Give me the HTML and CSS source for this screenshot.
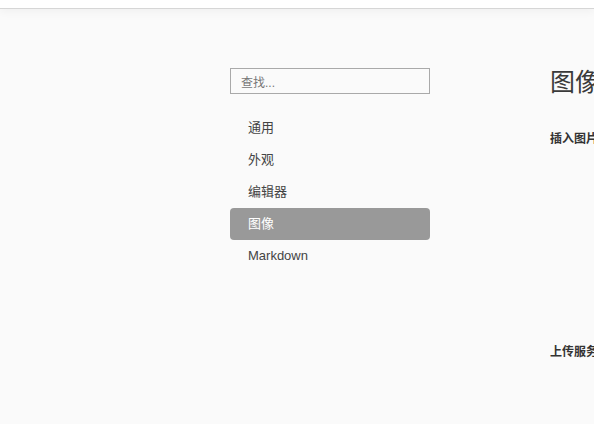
FILE: index.html
```html
<!DOCTYPE html>
<html lang="zh-CN">
<head>
<meta charset="utf-8">
<title>偏好设置</title>
<link rel="stylesheet" href="styles.css">
</head>
<body>
<div class="topbar"></div>
<div class="main">
  <nav class="sidebar">
    <div class="search"><span class="placeholder">查找...</span></div>
    <ul class="menu">
      <li class="item">通用</li>
      <li class="item">外观</li>
      <li class="item">编辑器</li>
      <li class="item active">图像</li>
      <li class="item">Markdown</li>
    </ul>
  </nav>
  <section class="content">
    <h1 class="title">图像</h1>
    <h2 class="section-head">插入图片时...</h2>
    <h2 class="section-head upload">上传服务设定</h2>
  </section>
</div>
</body>
</html>
```
FILE: styles.css
```css
html, body {
  margin: 0;
  padding: 0;
  width: 594px;
  height: 424px;
  overflow: hidden;
  background: #fafafa;
  font-family: "Liberation Sans", "Noto Sans CJK SC", sans-serif;
  color: #333;
}
.topbar {
  height: 8px;
  background: #ffffff;
  border-bottom: 1px solid #d6d6d6;
  box-shadow: 0 2px 10px rgba(0,0,0,0.05);
}
.main {
  display: flex;
  padding-left: 230px;
  padding-top: 59px;
}
.sidebar {
  width: 200px;
  flex: none;
}
.search {
  box-sizing: border-box;
  height: 26px;
  border: 1px solid #a9a9a9;
  background: #fafafa;
  padding-left: 10px;
  display: flex;
  align-items: center;
}
.placeholder {
  font-size: 12px;
  color: #777;
}
.menu {
  list-style: none;
  margin: 18px 0 0;
  padding: 0;
}
.item {
  height: 32px;
  line-height: 32px;
  padding-left: 18px;
  font-size: 13px;
  color: #444;
  border-radius: 4px;
}
.item.active {
  background: #999999;
  color: #ffffff;
}
.content {
  margin-left: 120px;
  white-space: nowrap;
}
.title {
  margin: 0;
  font-size: 25px;
  font-weight: normal;
  line-height: 28px;
  color: #3a3a3a;
}
.section-head {
  margin: 35px 0 0;
  font-size: 12px;
  font-weight: bold;
  line-height: 16px;
  color: #333;
}
.section-head.upload {
  margin-top: 197px;
}
```
